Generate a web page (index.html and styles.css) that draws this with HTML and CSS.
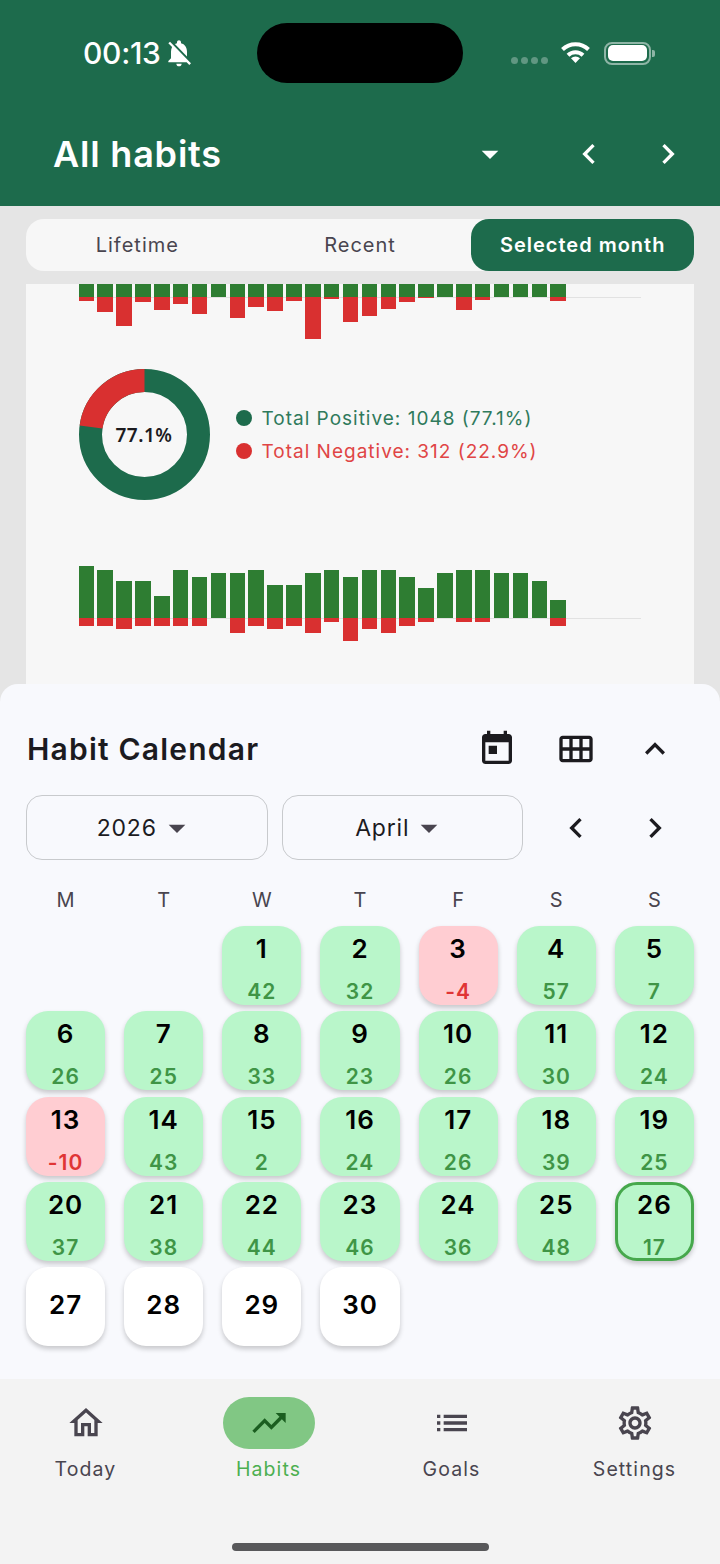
FILE: index.html
```html
<!DOCTYPE html>
<html lang="en">
<head>
    <meta charset="UTF-8">
    <meta name="viewport" content="width=device-width, initial-scale=1.0">
    <title>All habits</title>
    <link rel="stylesheet" href="styles.css">
</head>
<body>
<div class="phone">
    <header class="app-header">
        <div class="status-bar">
            <div class="status-left">
                <span class="clock">00:13</span>
                <svg class="bell" viewBox="0 0 24 24"><path d="M20 18.69L7.84 6.14 5.27 3.49 4 4.76l2.8 2.8v.01c-.52.99-.8 2.16-.8 3.42v5l-2 2v1h13.73l2 2L21 19.72l-1-1.03zM12 22c1.11 0 2-.89 2-2h-4c0 1.11.89 2 2 2zm6-7.32V11c0-3.08-1.64-5.64-4.5-6.32V4c0-.83-.67-1.5-1.5-1.5s-1.5.67-1.5 1.5v.68c-.15.03-.29.08-.42.12-.1.03-.2.07-.3.11h-.01c-.2.08-.4.17-.59.27-.1.05-.2.11-.29.16L18 14.68z"/></svg>
            </div>
            <div class="island"></div>
            <div class="status-right">
                <div class="signal"><i></i><i></i><i></i><i></i></div>
                <svg class="wifi" viewBox="0 0 31 22"><path class="wifi-arc" d="M2.5 8.5A18.5 18.5 0 0 1 28.5 8.5"/><path class="wifi-arc" d="M8 14.2A10.8 10.8 0 0 1 23 14.2"/><path d="M15.5 22L11 17.2A6.5 6.5 0 0 1 20 17.2Z"/></svg>
                <div class="battery"><div class="battery-level"></div></div>
                <div class="battery-nub"></div>
            </div>
        </div>
        <div class="title-row">
            <h1 class="page-title">All habits</h1>
            <span class="icon-btn title-drop"><svg class="icon" viewBox="0 0 24 24"><path d="M7 10l5 5 5-5z"/></svg></span>
            <span class="icon-btn"><svg class="icon" viewBox="0 0 24 24"><path d="M15.41 7.41L14 6l-6 6 6 6 1.41-1.41L10.83 12z"/></svg></span>
            <span class="icon-btn"><svg class="icon" viewBox="0 0 24 24"><path d="M10 6L8.59 7.41 13.17 12l-4.58 4.59L10 18l6-6z"/></svg></span>
        </div>
    </header>

    <main class="content">
        <div class="tabs">
            <div class="tab">Lifetime</div>
            <div class="tab">Recent</div>
            <div class="tab active">Selected month</div>
        </div>

        <section class="card">
            <div class="chart chart-top">
                <div class="bars up">
                    <i style="height:13px"></i><i style="height:13px"></i><i style="height:13px"></i><i style="height:13px"></i><i style="height:13px"></i><i style="height:13px"></i><i style="height:13px"></i><i style="height:13px"></i><i style="height:13px"></i><i style="height:13px"></i><i style="height:13px"></i><i style="height:13px"></i><i style="height:13px"></i><i style="height:13px"></i><i style="height:13px"></i><i style="height:13px"></i><i style="height:13px"></i><i style="height:13px"></i><i style="height:13px"></i><i style="height:13px"></i><i style="height:13px"></i><i style="height:13px"></i><i style="height:13px"></i><i style="height:13px"></i><i style="height:13px"></i><i style="height:13px"></i>
                </div>
                <div class="bars down">
                    <i style="height:3.5px"></i><i style="height:15px"></i><i style="height:29px"></i><i style="height:5px"></i><i style="height:12.5px"></i><i style="height:6.5px"></i><i style="height:16.5px"></i><i style="height:0"></i><i style="height:20.5px"></i><i style="height:10px"></i><i style="height:13.5px"></i><i style="height:3.5px"></i><i style="height:42px"></i><i style="height:1.5px"></i><i style="height:25px"></i><i style="height:19px"></i><i style="height:11.5px"></i><i style="height:5px"></i><i style="height:1px"></i><i style="height:0"></i><i style="height:12.5px"></i><i style="height:2.5px"></i><i style="height:0"></i><i style="height:0"></i><i style="height:0"></i><i style="height:4px"></i>
                </div>
            </div>

            <div class="summary">
                <div class="donut">
                    <svg viewBox="0 0 131 131">
                        <circle class="donut-pos" cx="65.5" cy="65.5" r="54"/>
                        <circle class="donut-neg" cx="65.5" cy="65.5" r="54"/>
                    </svg>
                    <span class="donut-label">77.1%</span>
                </div>
                <div class="legend">
                    <div class="legend-row pos"><span class="dot"></span>Total Positive: 1048 (77.1%)</div>
                    <div class="legend-row neg"><span class="dot"></span>Total Negative: 312 (22.9%)</div>
                </div>
            </div>

            <div class="chart chart-bottom">
                <div class="bars up">
                    <i style="height:52px"></i><i style="height:48.3px"></i><i style="height:37px"></i><i style="height:37px"></i><i style="height:22px"></i><i style="height:48.3px"></i><i style="height:40.7px"></i><i style="height:44.7px"></i><i style="height:44.7px"></i><i style="height:48.3px"></i><i style="height:33.3px"></i><i style="height:33.3px"></i><i style="height:44.7px"></i><i style="height:48.3px"></i><i style="height:40.7px"></i><i style="height:48.3px"></i><i style="height:48.3px"></i><i style="height:40.7px"></i><i style="height:29.7px"></i><i style="height:44.7px"></i><i style="height:48.3px"></i><i style="height:48.3px"></i><i style="height:44.7px"></i><i style="height:44.7px"></i><i style="height:37px"></i><i style="height:18.3px"></i>
                </div>
                <div class="bars down">
                    <i style="height:7.7px"></i><i style="height:7.7px"></i><i style="height:11.3px"></i><i style="height:7.7px"></i><i style="height:7.7px"></i><i style="height:7.7px"></i><i style="height:7.7px"></i><i style="height:0"></i><i style="height:15px"></i><i style="height:7.7px"></i><i style="height:11.3px"></i><i style="height:7.7px"></i><i style="height:15px"></i><i style="height:4px"></i><i style="height:22.7px"></i><i style="height:11.3px"></i><i style="height:15px"></i><i style="height:7.7px"></i><i style="height:4px"></i><i style="height:0"></i><i style="height:4px"></i><i style="height:4px"></i><i style="height:0"></i><i style="height:0"></i><i style="height:0"></i><i style="height:7.7px"></i>
                </div>
            </div>
        </section>
    </main>

    <section class="sheet">
        <div class="sheet-head">
            <h2 class="sheet-title">Habit Calendar</h2>
            <span class="icon-btn dark"><svg class="icon" viewBox="0 0 24 24"><path d="M19 3h-1V1h-2v2H8V1H6v2H5c-1.11 0-1.99.9-1.99 2L3 19c0 1.1.89 2 2 2h14c1.1 0 2-.9 2-2V5c0-1.1-.9-2-2-2zm0 16H5V8h14v11zM7 10h5v5H7z"/></svg></span>
            <span class="icon-btn dark"><svg class="icon" viewBox="0 0 24 24"><path d="M20 4H4c-1.1 0-2 .9-2 2v12c0 1.1.9 2 2 2h16c1.1 0 2-.9 2-2V6c0-1.1-.9-2-2-2zM8 11H4V6h4v5zm6 0h-4V6h4v5zm6 0h-4V6h4v5zM8 18H4v-5h4v5zm6 0h-4v-5h4v5zm6 0h-4v-5h4v5z"/></svg></span>
            <span class="icon-btn dark"><svg class="icon" viewBox="0 0 24 24"><path d="M12 8l-6 6 1.41 1.41L12 10.83l4.59 4.58L18 14z"/></svg></span>
        </div>

        <div class="picker-row">
            <div class="picker">2026<svg class="picker-caret" viewBox="0 0 24 24"><path d="M7 10l5 5 5-5z"/></svg></div>
            <div class="picker">April<svg class="picker-caret" viewBox="0 0 24 24"><path d="M7 10l5 5 5-5z"/></svg></div>
            <span class="icon-btn dark"><svg class="icon" viewBox="0 0 24 24"><path d="M15.41 7.41L14 6l-6 6 6 6 1.41-1.41L10.83 12z"/></svg></span>
            <span class="icon-btn dark"><svg class="icon" viewBox="0 0 24 24"><path d="M10 6L8.59 7.41 13.17 12l-4.58 4.59L10 18l6-6z"/></svg></span>
        </div>

        <div class="weekdays">
            <span>M</span><span>T</span><span>W</span><span>T</span><span>F</span><span>S</span><span>S</span>
        </div>

        <div class="days">
            <div class="day-gap"></div>
            <div class="day-gap"></div>
            <div class="day good"><b>1</b><small>42</small></div>
            <div class="day good"><b>2</b><small>32</small></div>
            <div class="day bad"><b>3</b><small>-4</small></div>
            <div class="day good"><b>4</b><small>57</small></div>
            <div class="day good"><b>5</b><small>7</small></div>
            <div class="day good"><b>6</b><small>26</small></div>
            <div class="day good"><b>7</b><small>25</small></div>
            <div class="day good"><b>8</b><small>33</small></div>
            <div class="day good"><b>9</b><small>23</small></div>
            <div class="day good"><b>10</b><small>26</small></div>
            <div class="day good"><b>11</b><small>30</small></div>
            <div class="day good"><b>12</b><small>24</small></div>
            <div class="day bad"><b>13</b><small>-10</small></div>
            <div class="day good"><b>14</b><small>43</small></div>
            <div class="day good"><b>15</b><small>2</small></div>
            <div class="day good"><b>16</b><small>24</small></div>
            <div class="day good"><b>17</b><small>26</small></div>
            <div class="day good"><b>18</b><small>39</small></div>
            <div class="day good"><b>19</b><small>25</small></div>
            <div class="day good"><b>20</b><small>37</small></div>
            <div class="day good"><b>21</b><small>38</small></div>
            <div class="day good"><b>22</b><small>44</small></div>
            <div class="day good"><b>23</b><small>46</small></div>
            <div class="day good"><b>24</b><small>36</small></div>
            <div class="day good"><b>25</b><small>48</small></div>
            <div class="day good today"><b>26</b><small>17</small></div>
            <div class="day future"><b>27</b></div>
            <div class="day future"><b>28</b></div>
            <div class="day future"><b>29</b></div>
            <div class="day future"><b>30</b></div>
        </div>
    </section>

    <nav class="bottom-nav">
        <div class="nav-items">
            <div class="nav-item">
                <span class="nav-pill"><svg class="icon" viewBox="0 0 24 24"><path d="M12 5.69l5 4.5V18h-2v-6H9v6H7v-7.81l5-4.5M12 3L2 12h3v8h6v-6h2v6h6v-8h3L12 3z"/></svg></span>
                <span class="nav-label">Today</span>
            </div>
            <div class="nav-item selected">
                <span class="nav-pill"><svg class="icon" viewBox="0 0 24 24"><path d="M16 6l2.29 2.29-4.88 4.88-4-4L2 16.59 3.41 18l6-6 4 4 6.3-6.29L22 12V6z"/></svg></span>
                <span class="nav-label">Habits</span>
            </div>
            <div class="nav-item">
                <span class="nav-pill"><svg class="icon" viewBox="0 0 24 24"><path d="M3 13h2v-2H3v2zm0 4h2v-2H3v2zm0-8h2V7H3v2zm4 4h14v-2H7v2zm0 4h14v-2H7v2zM7 7v2h14V7H7z"/></svg></span>
                <span class="nav-label">Goals</span>
            </div>
            <div class="nav-item">
                <span class="nav-pill"><svg class="icon" viewBox="0 0 24 24"><path d="M19.43 12.98c.04-.32.07-.64.07-.98 0-.34-.03-.66-.07-.98l2.11-1.65c.19-.15.24-.42.12-.64l-2-3.46c-.09-.16-.26-.25-.44-.25-.06 0-.12.01-.17.03l-2.49 1c-.52-.4-1.08-.73-1.69-.98l-.38-2.65C14.46 2.18 14.25 2 14 2h-4c-.25 0-.46.18-.49.42l-.38 2.65c-.61.25-1.17.59-1.69.98l-2.49-1c-.06-.02-.12-.03-.18-.03-.17 0-.34.09-.43.25l-2 3.46c-.13.22-.07.49.12.64l2.11 1.65c-.04.32-.07.65-.07.98 0 .33.03.66.07.98l-2.11 1.65c-.19.15-.24.42-.12.64l2 3.46c.09.16.26.25.44.25.06 0 .12-.01.17-.03l2.49-1c.52.4 1.08.73 1.69.98l.38 2.65c.03.24.24.42.49.42h4c.25 0 .46-.18.49-.42l.38-2.65c.61-.25 1.17-.59 1.69-.98l2.49 1c.06.02.12.03.18.03.17 0 .34-.09.43-.25l2-3.46c.12-.22.07-.49-.12-.64l-2.11-1.65zm-1.98-1.71c.04.31.05.52.05.73 0 .21-.02.43-.05.73l-.14 1.13.89.7 1.08.84-.7 1.21-1.27-.51-1.04-.42-.9.68c-.43.32-.84.56-1.25.73l-1.06.43-.16 1.13-.2 1.35h-1.4l-.19-1.35-.16-1.13-1.06-.43c-.43-.18-.83-.41-1.23-.71l-.91-.7-1.06.43-1.27.51-.7-1.21 1.08-.84.89-.7-.14-1.13c-.03-.31-.05-.54-.05-.74s.02-.43.05-.73l.14-1.13-.89-.7-1.08-.84.7-1.21 1.27.51 1.04.42.9-.68c.43-.32.84-.56 1.25-.73l1.06-.43.16-1.13.2-1.35h1.39l.19 1.35.16 1.13 1.06.43c.43.18.83.41 1.23.71l.91.7 1.06-.43 1.27-.51.7 1.21-1.07.85-.89.7.14 1.13zM12 8c-2.21 0-4 1.79-4 4s1.79 4 4 4 4-1.79 4-4-1.79-4-4-4zm0 6c-1.1 0-2-.9-2-2s.9-2 2-2 2 .9 2 2-.9 2-2 2z"/></svg></span>
                <span class="nav-label">Settings</span>
            </div>
        </div>
        <div class="home-indicator"></div>
    </nav>
</div>
</body>
</html>
```
FILE: styles.css
```css
* {
    box-sizing: border-box;
}
body {
    margin: 0;
    font-family: Inter, "Liberation Sans", sans-serif;
    background-color: #e5e5e5;
}
.phone {
    width: 720px;
    height: 1564px;
    display: flex;
    flex-direction: column;
    overflow: hidden;
}
.icon {
    width: 40px;
    height: 40px;
    fill: currentColor;
    display: block;
}
.icon-btn {
    width: 79px;
    height: 40px;
    flex: none;
    display: flex;
    justify-content: center;
    color: #fff;
}
.icon-btn.dark {
    color: #1c1b1f;
}

/* header */
.app-header {
    height: 206px;
    flex: none;
    padding-top: 23px;
    background-color: #1d6b4c;
    color: #fff;
}
.status-bar {
    display: flex;
    height: 60px;
}
.status-left {
    width: 257px;
    padding-left: 83px;
    display: flex;
    align-items: center;
    gap: 2px;
}
.clock {
    font-size: 30px;
    font-weight: 500;
    letter-spacing: -0.3px;
}
.bell {
    width: 32px;
    height: 32px;
    fill: #fff;
}
.island {
    width: 206px;
    height: 60px;
    border-radius: 30px;
    background-color: #000;
}
.status-right {
    margin-left: 48px;
    display: flex;
    align-items: center;
}
.signal {
    display: flex;
    gap: 3px;
    margin-top: 15px;
}
.signal i {
    width: 7px;
    height: 7px;
    border-radius: 50%;
    background-color: rgba(255, 255, 255, 0.3);
}
.wifi {
    width: 31px;
    height: 22px;
    margin-left: 12px;
    margin-top: -2px;
    fill: #fff;
}
.wifi-arc {
    fill: none;
    stroke: #fff;
    stroke-width: 4;
}
.battery {
    width: 47px;
    height: 23px;
    margin-left: 13px;
    padding: 1.5px 2px;
    border: 2px solid rgba(255, 255, 255, 0.5);
    border-radius: 8px;
}
.battery-level {
    height: 100%;
    border-radius: 5px;
    background-color: #fff;
}
.battery-nub {
    width: 3px;
    height: 7px;
    margin-left: 1px;
    border-radius: 0 2px 2px 0;
    background-color: rgba(255, 255, 255, 0.5);
}
.title-row {
    display: flex;
    align-items: center;
    height: 48px;
    margin-top: 47px;
    padding: 0 13px 0 53px;
}
.page-title {
    flex: 1;
    margin: 0;
    font-size: 36px;
    font-weight: 600;
    letter-spacing: 0.8px;
}
.title-drop {
    margin-right: 20px;
}

/* tabs and charts */
.content {
    height: 478px;
    flex: none;
    padding: 13px 26px 0;
    display: flex;
    flex-direction: column;
}
.tabs {
    display: grid;
    grid-template-columns: repeat(3, 1fr);
    height: 52px;
    flex: none;
    border-radius: 18px;
    background-color: #f7f7f7;
}
.tab {
    display: flex;
    align-items: center;
    justify-content: center;
    font-size: 20px;
    letter-spacing: 1px;
    color: #49454f;
}
.tab.active {
    border-radius: 18px;
    background-color: #1d6b4c;
    color: #fff;
    font-weight: 600;
}
.card {
    flex: 1;
    margin-top: 13px;
    padding-left: 52.5px;
    overflow: hidden;
    background-color: #f7f7f7;
}
.chart {
    width: 562px;
}
.bars {
    display: flex;
    gap: 3.38px;
}
.bars i {
    width: 15.5px;
    flex: none;
}
.bars.up {
    align-items: flex-end;
    box-shadow: 0 1px 0 #e2e2e2;
}
.bars.up i {
    background-color: #2e7d32;
}
.bars.down {
    align-items: flex-start;
}
.bars.down i {
    background-color: #d93030;
}
.chart-top .up {
    height: 13px;
}
.chart-top .down {
    height: 42px;
}
.summary {
    display: flex;
    align-items: center;
    margin-top: 30px;
}
.donut {
    width: 131px;
    height: 131px;
    position: relative;
    flex: none;
}
.donut svg {
    display: block;
    transform: rotate(-90deg);
}
.donut circle {
    fill: none;
    stroke-width: 23;
}
.donut-pos {
    stroke: #1d6b4c;
}
.donut-neg {
    stroke: #d93030;
    stroke-dasharray: 77.7 339.3;
    stroke-dashoffset: -261.6;
}
.donut-label {
    position: absolute;
    inset: 0;
    display: flex;
    align-items: center;
    justify-content: center;
    font-family: "Noto Sans", sans-serif;
    font-size: 19px;
    font-weight: 600;
    letter-spacing: 0.5px;
    color: #1c1b1f;
}
.legend {
    margin-left: 26px;
    display: flex;
    flex-direction: column;
    gap: 9px;
}
.legend-row {
    display: flex;
    align-items: center;
    height: 24px;
    font-size: 19px;
    letter-spacing: 1px;
}
.legend-row.pos {
    color: #2f7a5c;
}
.legend-row.neg {
    color: #e04545;
}
.dot {
    width: 16px;
    height: 16px;
    margin-right: 10px;
    border-radius: 50%;
}
.pos .dot {
    background-color: #1d6b4c;
}
.neg .dot {
    background-color: #d93030;
}
.chart-bottom {
    margin-top: 66px;
}
.chart-bottom .up {
    height: 52px;
}

/* calendar sheet */
.sheet {
    height: 695px;
    flex: none;
    padding: 45px 26px 0;
    border-radius: 18px 18px 0 0;
    background-color: #f8f9fd;
}
.sheet-head {
    display: flex;
    align-items: center;
    height: 40px;
}
.sheet-title {
    flex: 1;
    margin: 0 0 0 1px;
    font-size: 30px;
    font-weight: 600;
    letter-spacing: 1.2px;
    color: #1c1b1f;
}
.picker-row {
    display: flex;
    align-items: center;
    margin-top: 26px;
}
.picker {
    flex: 1;
    height: 65px;
    display: flex;
    align-items: center;
    justify-content: center;
    border: 1.5px solid #c8cacd;
    border-radius: 16px;
    font-size: 23px;
    letter-spacing: 0.8px;
    color: #1c1b1f;
}
.picker + .picker {
    margin: 0 13px 0 14px;
}
.picker-caret {
    width: 40px;
    height: 40px;
    fill: #49454f;
}
.weekdays {
    display: grid;
    grid-template-columns: repeat(7, 1fr);
    column-gap: 19px;
    margin-top: 28px;
    font-size: 20px;
    line-height: 24px;
    text-align: center;
    color: #49454f;
}
.days {
    display: grid;
    grid-template-columns: repeat(7, 1fr);
    grid-auto-rows: 79px;
    gap: 6.33px 19px;
    margin-top: 14px;
}
.day {
    display: flex;
    flex-direction: column;
    align-items: center;
    justify-content: space-between;
    padding-top: 8px;
    border-radius: 22px;
    box-shadow: 0 3px 5px rgba(0, 0, 0, 0.2);
}
.day b {
    font-size: 26px;
    font-weight: 600;
    line-height: 30px;
    letter-spacing: 1px;
    color: #000;
}
.day small {
    font-size: 21px;
    font-weight: 600;
    line-height: 26px;
    letter-spacing: 1px;
}
.day.good {
    background-color: #b9f6ca;
}
.day.good small {
    color: #3f9546;
}
.day.bad {
    background-color: #ffcdd2;
}
.day.bad small {
    color: #e03535;
}
.day.today {
    padding-top: 5px;
    border: 3px solid #46a84c;
}
.day.today small {
    margin-bottom: -3px;
}
.day.future {
    justify-content: center;
    padding: 0 0 4px;
    background-color: #fff;
}

/* bottom navigation */
.bottom-nav {
    height: 185px;
    flex: none;
    padding-top: 18px;
    background-color: #f3f3f3;
}
.nav-items {
    display: grid;
    grid-template-columns: repeat(4, 183px);
    justify-content: center;
}
.nav-item {
    display: flex;
    flex-direction: column;
    align-items: center;
    color: #49454f;
}
.nav-pill {
    width: 92px;
    height: 52px;
    display: flex;
    align-items: center;
    justify-content: center;
    border-radius: 26px;
}
.nav-label {
    margin-top: 8px;
    font-size: 19.5px;
    line-height: 24px;
    letter-spacing: 1.1px;
}
.selected .nav-pill {
    background-color: #81c784;
    color: #1b5e20;
}
.selected .nav-label {
    color: #4caf50;
}
.home-indicator {
    width: 257px;
    height: 8px;
    margin: 62px auto 0;
    border-radius: 4px;
    background-color: #58585a;
}
```
